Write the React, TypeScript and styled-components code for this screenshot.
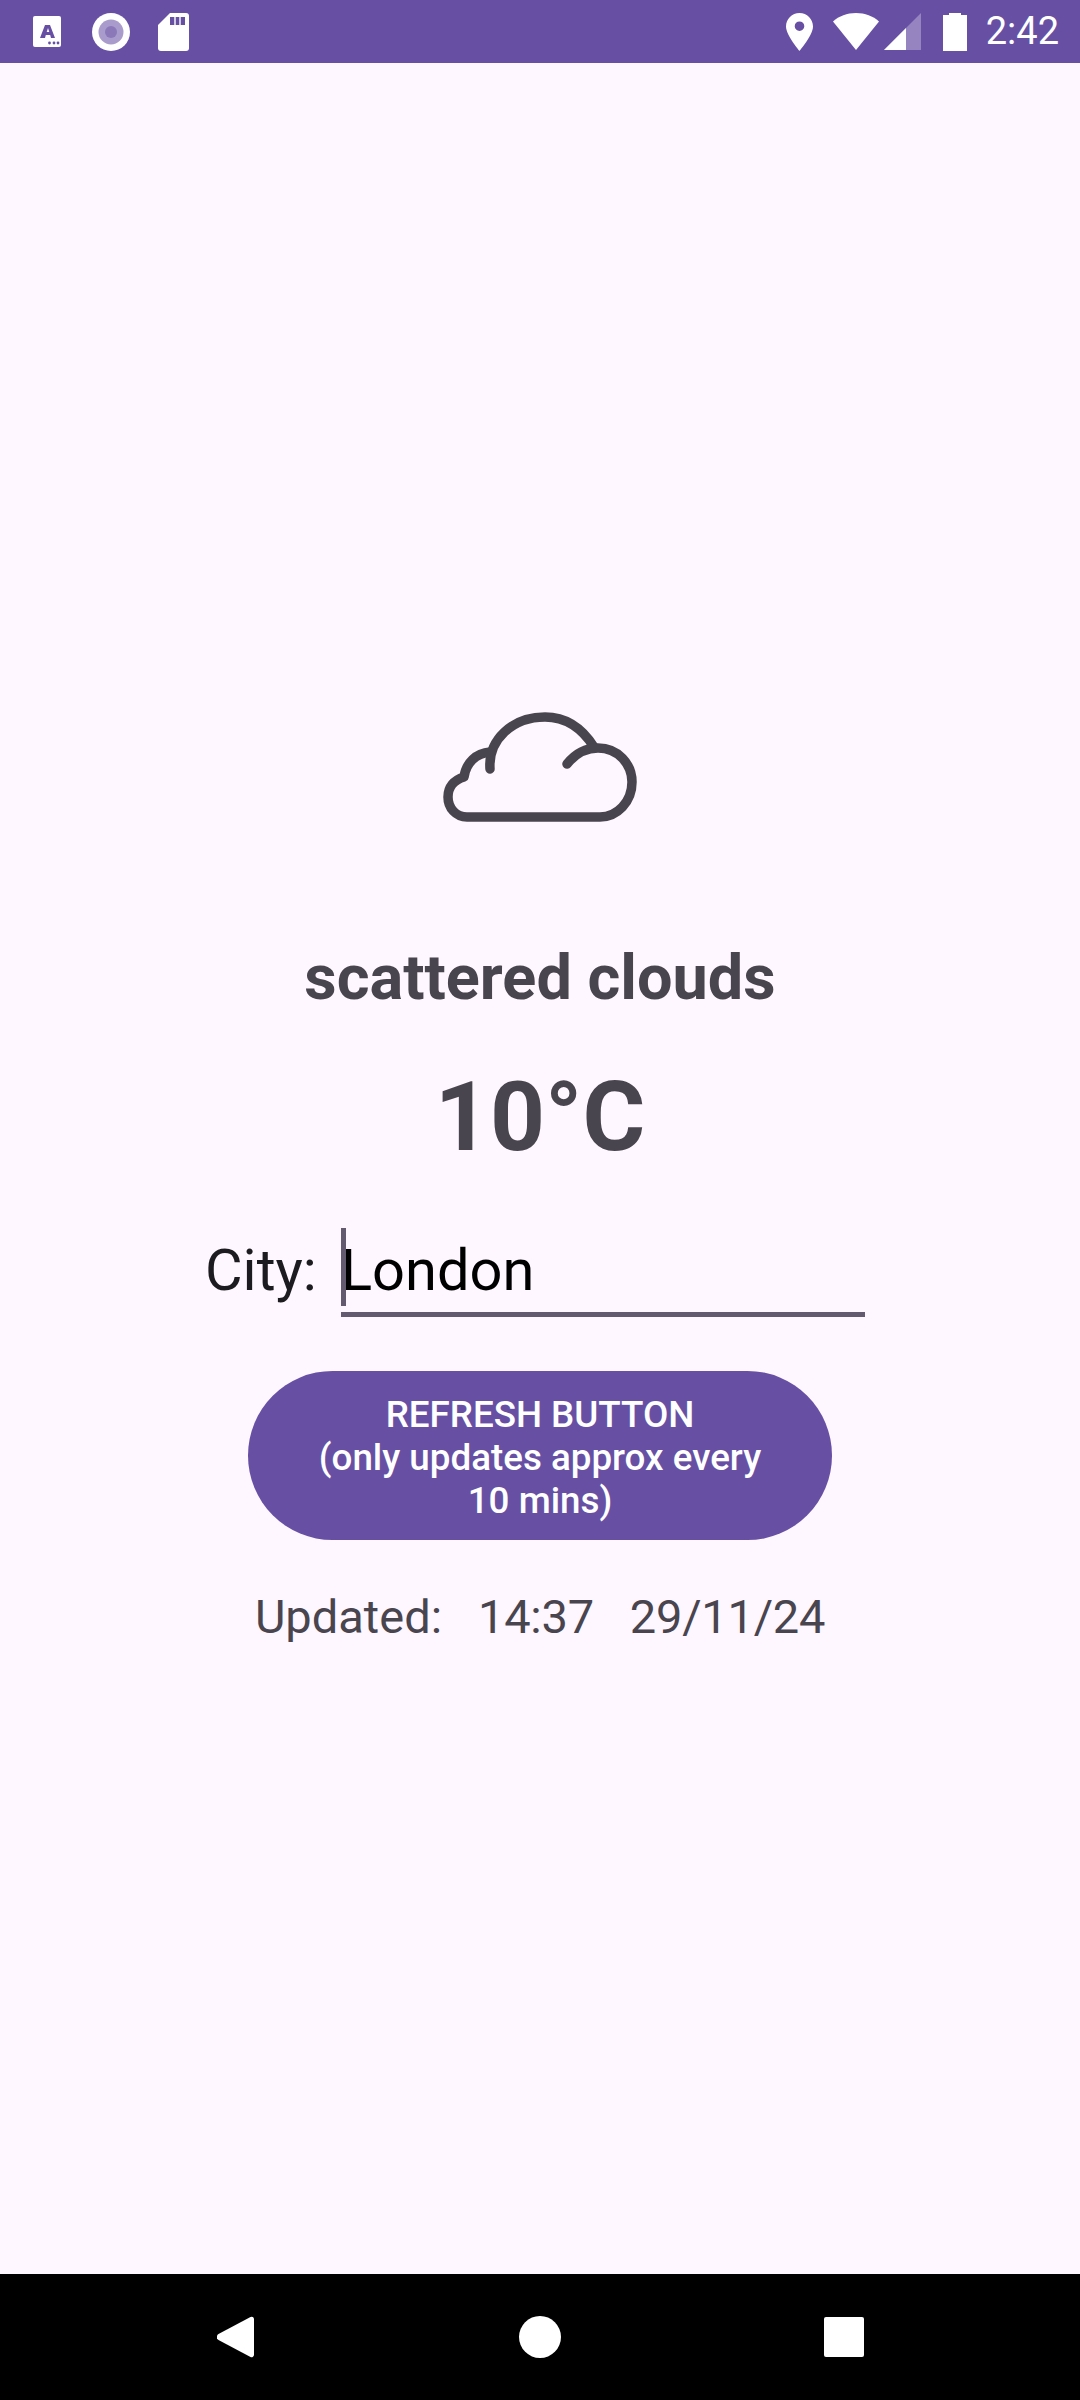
import React from "react";
import styled, { createGlobalStyle } from "styled-components";

const Global = createGlobalStyle`
  html, body { margin: 0; padding: 0; background: #fef7ff; }
  body { font-family: Roboto, "Liberation Sans", sans-serif; }
`;

const Screen = styled.div`
  width: 1080px;
  height: 2400px;
  display: flex;
  flex-direction: column;
  background: #fef7ff;
  overflow: hidden;
`;

const StatusBar = styled.div`
  height: 63px;
  flex: none;
  background: #6750a4;
  display: flex;
  align-items: center;
  justify-content: space-between;
  padding: 0 21px 0 33px;
  box-sizing: border-box;
`;

const IconGroup = styled.div`
  display: flex;
  align-items: center;
`;

const Clock = styled.span`
  font-size: 38px;
  color: #fff;
  margin-left: 19px;
  line-height: 63px;
`;

const Main = styled.main`
  flex: 1;
  display: flex;
  flex-direction: column;
  align-items: center;
  padding-top: 627px;
`;

const CloudIcon = styled.svg`
  display: block;
  width: 240px;
  height: 150px;
`;

const Condition = styled.h1`
  margin: 101px 0 0;
  font-size: 63px;
  font-weight: 700;
  line-height: 74px;
  color: #49454f;
`;

const Temperature = styled.div`
  margin-top: 46px;
  font-size: 96px;
  font-weight: 700;
  line-height: 113px;
  color: #49454f;
`;

const CityRow = styled.div`
  margin-top: 54px;
  margin-right: 10px;
  display: flex;
  align-items: flex-start;
  width: 660px;
`;

const CityLabel = styled.label`
  width: 136px;
  flex: none;
  font-size: 57.75px;
  line-height: 68px;
  padding-top: 8px;
  color: #1c1b1f;
`;

const CityField = styled.div`
  width: 524px;
  height: 89px;
  box-sizing: border-box;
  border-bottom: 5px solid #645a70;
  position: relative;
  font-size: 57.75px;
  line-height: 68px;
  padding-top: 8px;
  color: #000;
`;

const Caret = styled.span`
  position: absolute;
  left: 0;
  top: 0;
  width: 5px;
  height: 78px;
  background: #645a70;
`;

const RefreshButton = styled.button`
  margin-top: 54px;
  width: 584px;
  height: 169px;
  border: none;
  border-radius: 85px;
  background: #6750a4;
  color: #fff;
  font-family: inherit;
  font-size: 36.75px;
  font-weight: 500;
  line-height: 43px;
  text-align: center;
  padding: 4px 60px 0;
`;

const Updated = styled.div`
  margin-top: 49px;
  font-size: 47px;
  line-height: 55px;
  color: #49454f;
  display: flex;
  gap: 36px;
`;

const UpdatedValue = styled.span`
  letter-spacing: -0.25px;
`;

const NavBar = styled.nav`
  height: 126px;
  flex: none;
  background: #000;
  display: flex;
  align-items: center;
  justify-content: space-between;
  padding: 0 216px 0 217px;
  box-sizing: border-box;
`;

export default function App() {
  return (
    <Screen>
      <Global />
      <StatusBar>
        <IconGroup>
          <svg width="28" height="31" viewBox="0 0 28 31" style={{ marginRight: 31 }}>
            <rect width="28" height="31" rx="2" fill="#fff" />
            <path d="M7 22 12 9h5l5 13h-4l-.8-3h-4.400L12 22Zm6.700-6h2.600l-1.300-4Z" fill="#6750a4" fillRule="evenodd" />
            <circle cx="16.500" cy="27" r="1.400" fill="#6750a4" />
            <circle cx="21" cy="27" r="1.400" fill="#6750a4" />
            <circle cx="25" cy="27" r="1.400" fill="#6750a4" />
          </svg>
          <svg width="38" height="38" viewBox="0 0 38 38" style={{ marginRight: 28 }}>
            <circle cx="19" cy="19" r="19" fill="#fff" />
            <circle cx="19" cy="19" r="12.500" fill="#a99bcb" />
            <circle cx="19" cy="19" r="6" fill="#8b78b9" />
          </svg>
          <svg width="31" height="38" viewBox="0 0 31 38">
            <path d="M12 0h16a3 3 0 0 1 3 3v32a3 3 0 0 1-3 3H3a3 3 0 0 1-3-3V12Z" fill="#fff" />
            <path d="M12 4h4.300v8H12Zm5.700 0h3.600v8h-3.600Zm5 0H27v8h-4.300Z" fill="#6750a4" />
          </svg>
        </IconGroup>
        <IconGroup>
          <svg width="27" height="38" viewBox="0 0 27 38" style={{ marginRight: 20 }}>
            <path d="M13.500 0C6 0 0 6 0 13.500 0 22 13.500 38 13.500 38S27 22 27 13.500C27 6 21 0 13.500 0Zm0 18a4.800 4.800 0 1 1 0-9.600 4.800 4.800 0 0 1 0 9.600Z" fill="#fff" fillRule="evenodd" />
          </svg>
          <svg width="46" height="37" viewBox="0 0 46 37" style={{ marginRight: 5 }}>
            <path d="M0 8.500C6 3 14 0 23 0s17 3 23 8.500L23 37Z" fill="#fff" />
          </svg>
          <svg width="37" height="37" viewBox="0 0 37 37" style={{ marginRight: 22 }}>
            <path d="M0 37 37 0v37Z" fill="#9584bf" />
            <path d="M0 37 22 15v22Z" fill="#fff" />
          </svg>
          <svg width="24" height="38" viewBox="0 0 24 38">
            <path d="M6 2V0h12v2h6v36H0V2Z" fill="#fff" />
          </svg>
          <Clock>2:42</Clock>
        </IconGroup>
      </StatusBar>
      <Main>
        <CloudIcon viewBox="0 0 240 150" fill="none" stroke="#49454f" strokeWidth="9.500" strokeLinecap="round" strokeLinejoin="round">
          <path d="M70 79C68 50 92 27 125 27c20 0 37 11 49 30" />
          <path d="M147 74c8-10 18-16 31-16 20 0 34 16 34 34 0 20-15 35-32 35H47c-11 0-19-9-19-20 0-10 6-17 16-20 2-14 12-24 26-25" />
        </CloudIcon>
        <Condition>scattered clouds</Condition>
        <Temperature>10°C</Temperature>
        <CityRow>
          <CityLabel>City:</CityLabel>
          <CityField>
            <Caret />
            London
          </CityField>
        </CityRow>
        <RefreshButton>
          REFRESH BUTTON
          <br />
          (only updates approx every 10 mins)
        </RefreshButton>
        <Updated>
          <span>Updated:</span>
          <UpdatedValue>14:37</UpdatedValue>
          <UpdatedValue>29/11/24</UpdatedValue>
        </Updated>
      </Main>
      <NavBar>
        <svg width="38" height="42" viewBox="0 0 38 42">
          <path d="M33.500 1 1.500 18a3.500 3.500 0 0 0 0 6l32 17a2.500 2.500 0 0 0 3.500-2V3a2.500 2.500 0 0 0-3.500-2Z" fill="#fff" />
        </svg>
        <svg width="42" height="42" viewBox="0 0 42 42">
          <circle cx="21" cy="21" r="21" fill="#fff" />
        </svg>
        <svg width="40" height="40" viewBox="0 0 40 40">
          <rect width="40" height="40" rx="2" fill="#fff" />
        </svg>
      </NavBar>
    </Screen>
  );
}
